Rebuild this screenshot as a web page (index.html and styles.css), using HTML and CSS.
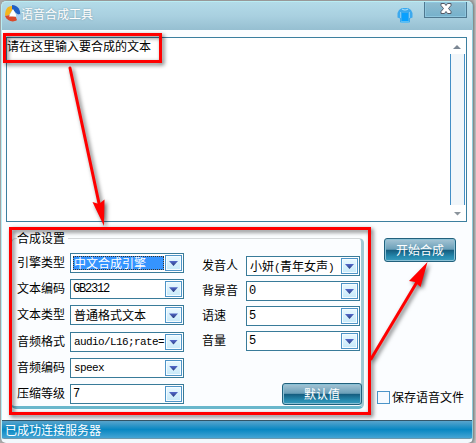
FILE: index.html
```html
<!DOCTYPE html>
<html lang="zh-CN">
<head>
<meta charset="utf-8">
<title>语音合成工具</title>
<link rel="stylesheet" href="styles.css">
</head>
<body>
<div class="window">
  <header class="titlebar">
    <svg class="logo" width="17" height="17" viewBox="0 0 17 17">
      <path d="M7 1C2 1 0 5 0 11L4 10L8 4Z" fill="#f5b51c"/>
      <path d="M7 0C13 0 16 5 15 11L11 8L7 4Z" fill="#1f5fc4"/>
      <path d="M0 11L5 10L11 12L12 15C8 18 2 16 0 11Z" fill="#d9492b"/>
      <path d="M8 4L12 11.500H4Z" fill="#fff"/>
      <path d="M11 10L15 9L16 14L12 15Z" fill="#a9cfef"/>
    </svg>
    <h1 class="title">语音合成工具</h1>
    <svg class="skin" width="16" height="17" viewBox="0 0 16 17">
      <path d="M5 1H11L14 3L15.500 6V10.500L13 11.500V15L11.500 16H4.500L3 15V11.500L.5 10.500V6L2 3Z" fill="#3ba9ee"/>
      <path d="M3.500 5V11M12.500 5V11" stroke="#7fc9f7"/>
      <path d="M5 2Q8 4 11 2" fill="none" stroke="#a5ddfb" stroke-width="1.200"/>
      <path d="M5 6H11V14H5Z" fill="#08a0ff"/>
      <path d="M4 15H12" stroke="#7fd0f5"/>
    </svg>
    <div class="close">
      <svg width="12" height="11" viewBox="0 0 12 11">
        <path d="M1 .5H4.500L6 2.500L7.500 .5H11V2.500L8.500 5.500L11 8.500V10.500H7.500L6 8.500L4.500 10.500H1V8.500L3.500 5.500L1 2.500Z" fill="#fff" stroke="#545a66"/>
      </svg>
    </div>
  </header>
  <main class="body">
    <div class="editor">
      <div class="editor-text">请在这里输入要合成的文本</div>
      <div class="scroll">
        <svg width="16" height="16" viewBox="0 0 16 16"><path d="M3 11L7 7L11 11Z" fill="#7c8794"/></svg>
        <div class="track"></div>
        <svg width="16" height="16" viewBox="0 0 16 16"><path d="M4 7H11L7.500 10.500Z" fill="#8b949c"/></svg>
      </div>
    </div>
    <div class="lower">
      <section class="group">
        <h2 class="legend">合成设置</h2>
        <div class="columns">
          <div class="fields left">
            <span>引擎类型</span><div class="combo"><b class="selected">中文合成引擎</b><i></i></div>
            <span>文本编码</span><div class="combo"><b class="mono">GB2312</b><i></i></div>
            <span>文本类型</span><div class="combo"><b>普通格式文本</b><i></i></div>
            <span>音频格式</span><div class="combo"><b class="mono slab">audio/L16;rate=</b><i></i></div>
            <span>音频编码</span><div class="combo"><b class="mono slab">speex</b><i></i></div>
            <span>压缩等级</span><div class="combo"><b class="mono">7</b><i></i></div>
          </div>
          <div class="right-side">
            <div class="fields right">
              <span>发音人</span><div class="combo"><b>小妍<em>(</em>青年女声<em>)</em></b><i></i></div>
              <span>背景音</span><div class="combo"><b class="mono">0</b><i></i></div>
              <span>语速</span><div class="combo"><b class="mono">5</b><i></i></div>
              <span>音量</span><div class="combo"><b class="mono">5</b><i></i></div>
            </div>
            <div class="button default">默认值</div>
          </div>
        </div>
      </section>
      <aside class="actions">
        <div class="button start">开始合成</div>
        <div class="save"><span class="box"></span>保存语音文件</div>
      </aside>
    </div>
  </main>
  <footer class="status">已成功连接服务器</footer>
</div>
<svg class="marks" width="476" height="443" viewBox="0 0 476 443">
  <g fill="none" stroke="#f00" stroke-width="3">
    <rect x="4.500" y="34.500" width="156" height="27"/>
    <rect x="10.500" y="228.500" width="359" height="185"/>
    <path d="M70 68L100 208" stroke-linecap="round"/>
    <path d="M371 359L417 282" stroke-linecap="round"/>
  </g>
  <path d="M104 226L92.500 202L99 204L104.500 199.500Z" fill="#f00"/>
  <path d="M427.500 262L409 281L415 282L420.500 287Z" fill="#f00"/>
</svg>
</body>
</html>
```
FILE: styles.css
```css
* { box-sizing: border-box; }
body {
  position: relative;
  margin: 0;
  width: 476px;
  height: 443px;
  overflow: hidden;
  background: linear-gradient(90deg, #aaa 0 473px, #c8c8c8 476px);
  font: 12px/16px "Noto Sans CJK SC", sans-serif;
  color: #000;
}
.window {
  display: flex;
  flex-direction: column;
  width: 472px;
  height: 442px;
  margin: 1px 0 0 1px;
  border: 1px solid #b9edf3;
  border-right-color: #8fcbd9;
  border-bottom: 4px solid #f2f8fc;
  border-radius: 5px;
  background: #fbfdff;
  box-shadow: 1px 0 3px #777;
  overflow: hidden;
}
.titlebar {
  display: flex;
  align-items: flex-start;
  flex: 0 0 28px;
  padding-left: 3px;
  background: linear-gradient(#b3dbe8, #a9d0e0 50%, #96bfd1);
}
.logo { margin-top: 3px; }
.title {
  flex: 1;
  margin: 4px 0 0 -1px;
  font-size: 12px;
  line-height: 16px;
  font-weight: 400;
  color: #fff;
  text-shadow: 0 0 2px #7796a5;
}
.skin { margin: 5px 11px 0 0; }
.close {
  display: flex;
  justify-content: center;
  width: 43px;
  height: 16px;
  margin-right: 5px;
  padding-top: 1px;
  border: 1px solid #4e7890;
  border-top: 0;
  background: linear-gradient(#8fbccf, #75b1cc);
  box-shadow: inset 0 0 0 1px #8ec6de;
}
.body { flex: 1; padding: 7px 4px 0; }
.editor {
  display: flex;
  width: 461px;
  height: 185px;
  border: 1px solid #3c7f9f;
  background: #fff;
}
.editor-text { flex: 1; line-height: 15px; }
.scroll { display: flex; flex-direction: column; width: 16px; }
.scroll svg { flex: none; }
.track {
  flex: 1;
  width: 15px;
  background: #f1f6fa;
  border: solid #438fc6;
  border-width: 0 1px;
}
.lower { display: flex; height: 197px; }
.group {
  width: 353px;
  height: 171px;
  margin: 16px 0 0 5px;
  border: 1px solid #d5d8da;
  border-left: 1px solid #bdc3c6;
  border-right: 3px solid #9fc9d4;
  border-bottom: 3px solid #69b7cc;
  border-radius: 5px;
}
.legend {
  width: 51px;
  height: 16px;
  margin: -9px 0 0 5px;
  background: #fbfdff;
  font-size: 12px;
  font-weight: 400;
}
.columns { display: flex; margin-top: 7px; padding-left: 5px; }
.fields { display: grid; align-items: center; }
.fields span { line-height: 18px; margin-top: -2px; white-space: nowrap; }
.left { grid-template-columns: 53px 114px; grid-auto-rows: 20px; row-gap: 6.2px; }
.right { grid-template-columns: 44px 114px; grid-auto-rows: 20px; row-gap: 5px; margin-top: 3px; }
.right-side { margin-left: 18px; }
.combo {
  display: flex;
  width: 114px;
  height: 20px;
  border: 1px solid #397b99;
  background: #fff;
  padding: 1px;
}
.combo b {
  flex: 1;
  width: 0;
  height: 16px;
  padding-left: 2px;
  font-weight: 400;
  line-height: 16px;
  white-space: nowrap;
}
.combo .mono { font: 12px/17px "Liberation Mono", monospace; letter-spacing: -1.2px; padding-left: 1px; }
.combo .slab { font-size: 11px; letter-spacing: -0.6px; padding-left: 2px; }
.combo .selected {
  margin: 1px 1px 0 1px;
  height: 14px;
  padding-left: 1px;
  line-height: 14px;
  background: #3594ff;
  color: #fff;
  outline: 1px dotted #3c3428;
  outline-offset: -1px;
}
.combo em {
  display: inline-block;
  width: 6px;
  font: 11px/14px "Liberation Mono", monospace;
}
.combo i {
  position: relative;
  flex: none;
  width: 17px;
  height: 16px;
  border: 1px solid #4e94c7;
  background: linear-gradient(#e9f8ff, #c7e9f9);
  box-shadow: inset 0 0 0 1px #f5fcff;
}
.combo i::after {
  content: "";
  display: block;
  width: 9px;
  height: 5px;
  margin: 5px 0 0 3px;
  background: linear-gradient(#5368cc, #283d7c);
  clip-path: polygon(0 0, 100% 0, 50% 100%);
}
.button {
  border: 1px solid #21617d;
  border-radius: 3px;
  background: linear-gradient(#a6c5d5, #6a9fb8 47%, #145b7d 50%, #2589ae 80%, #399dbd);
  box-shadow: inset 0 0 0 1px #8bc1d6;
  color: #fff;
  text-align: center;
}
.default { width: 80px; height: 22px; margin: 32px 0 0 80px; line-height: 19px; }
.actions { margin: 16px 0 0 13px; }
.start { width: 72px; height: 24px; margin-left: 7px; line-height: 21px; }
.save { display: flex; align-items: center; gap: 2px; margin-top: 127px; line-height: 16px; white-space: nowrap; }
.box { width: 13px; height: 13px; border: 1px solid #4b94c8; background: #f5faff; }
.status {
  flex: 0 0 19px;
  padding-left: 3px;
  border-top: 1px solid #34576a;
  border-bottom: 1px solid #6c98ad;
  background: linear-gradient(#59a5cd, #0887c2 50%, #45a5d4);
  color: #fff;
  line-height: 17px;
}
.marks { position: absolute; left: 0; top: 0; filter: drop-shadow(2px 2px 2px rgba(0, 0, 0, .6)); }
```
